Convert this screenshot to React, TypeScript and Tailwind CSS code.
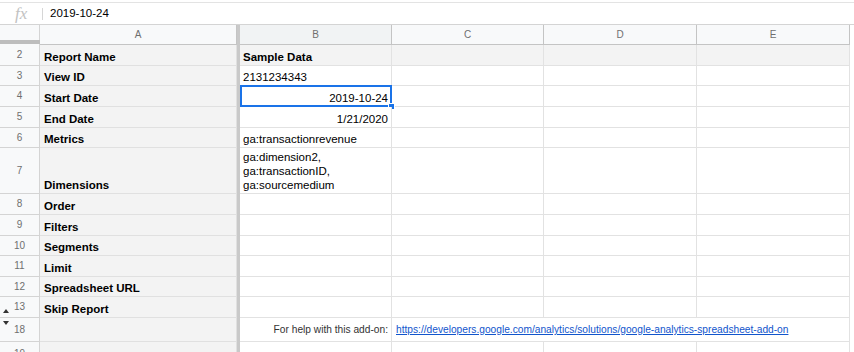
type Row = {
  n: string
  h: string
  a?: string
  b?: string | string[]
  right?: boolean
  bold?: boolean
  gray?: boolean
  selected?: boolean
  up?: boolean
}

const rows: Row[] = [
  { n: '2', h: 'h-[21px]', a: 'Report Name', b: 'Sample Data', bold: true, gray: true },
  { n: '3', h: 'h-[20px]', a: 'View ID', b: '2131234343' },
  { n: '4', h: 'h-[21px]', a: 'Start Date', b: '2019-10-24', right: true, selected: true },
  { n: '5', h: 'h-[21px]', a: 'End Date', b: '1/21/2020', right: true },
  { n: '6', h: 'h-[20px]', a: 'Metrics', b: 'ga:transactionrevenue' },
  { n: '7', h: 'h-[46px]', a: 'Dimensions', b: ['ga:dimension2,', 'ga:transactionID,', 'ga:sourcemedium'] },
  { n: '8', h: 'h-[21px]', a: 'Order' },
  { n: '9', h: 'h-[21px]', a: 'Filters' },
  { n: '10', h: 'h-[20px]', a: 'Segments' },
  { n: '11', h: 'h-[21px]', a: 'Limit' },
  { n: '12', h: 'h-[20px]', a: 'Spreadsheet URL' },
  { n: '13', h: 'h-[21px]', a: 'Skip Report', up: true },
]

const font = { fontFamily: '"Liberation Sans", Arial, sans-serif' }

function RowNum({ n, children }: { n: string; children?: React.ReactNode }) {
  return (
    <div className="relative flex w-[40px] shrink-0 items-center justify-center border-r border-b border-[#d4d4d4] bg-[#f8f9fa] text-[10px] text-[#6f6f6f]">
      {n}
      {children}
    </div>
  )
}

function FreezeBar() {
  return <div className="w-[3px] shrink-0 bg-[#c9c9c9]" />
}

export default function App() {
  return (
    <div className="h-[352px] w-[854px] overflow-hidden bg-white text-black" style={font}>
      {/* formula bar */}
      <div className="h-[3px] border-b border-[#e3e3e3]" />
      <div className="flex h-[21px] items-center">
        <div className="w-[42px] pl-[15px] text-[17px] italic leading-none text-[#c2c2c2]" style={{ fontFamily: '"Liberation Serif", serif' }}>
          fx
        </div>
        <div className="h-[12px] w-px bg-[#d6d6d6]" />
        <div className="pl-[7px] text-[11.5px]">2019-10-24</div>
      </div>

      {/* column headers */}
      <div className="flex h-[21px] border-t border-[#d4d4d4] text-[10px] text-[#6f6f6f]">
        <div className="relative w-[40px] shrink-0 border-r border-[#d4d4d4] bg-[#f8f9fa]">
          <div className="absolute bottom-[1px] left-0 h-[4px] w-[40px] bg-[#bdbdbd]" />
        </div>
        <div className="flex w-[197px] shrink-0 items-center justify-center border-r border-b border-[#c4c4c4] bg-[#f8f9fa]">A</div>
        <FreezeBar />
        <div className="flex w-[152px] shrink-0 items-center justify-center border-r border-b border-[#c4c4c4] bg-[#f1f3f4]">B</div>
        <div className="flex w-[152px] shrink-0 items-center justify-center border-r border-b border-[#c4c4c4] bg-[#f8f9fa]">C</div>
        <div className="flex w-[153px] shrink-0 items-center justify-center border-r border-b border-[#c4c4c4] bg-[#f8f9fa]">D</div>
        <div className="flex w-[153px] shrink-0 items-center justify-center border-r border-b border-[#c4c4c4] bg-[#f8f9fa]">E</div>
      </div>

      {rows.map((r) => {
        const bg = r.gray ? 'bg-[#f3f3f3]' : 'bg-white'
        return (
          <div key={r.n} className={`flex ${r.h} text-[11.5px] leading-[14px]`}>
            <RowNum n={r.n}>
              {r.up && (
                <svg className="absolute bottom-[4px] left-[3px]" width="6" height="4" viewBox="0 0 6 4">
                  <path d="M0 4 L3 0 L6 4 Z" fill="#333" />
                </svg>
              )}
            </RowNum>
            <div className="flex w-[197px] shrink-0 items-end border-r border-b border-[#e0e0e0] bg-[#f3f3f3] pb-[1px] pl-[4px] font-bold">
              {r.a}
            </div>
            <FreezeBar />
            <div
              className={`relative flex w-[152px] shrink-0 items-end border-r border-b border-[#e2e2e2] ${bg} px-[3px] pb-[1px] ${
                r.right ? 'justify-end' : ''
              } ${r.bold ? 'font-bold' : ''}`}
            >
              {Array.isArray(r.b) ? (
                <div>
                  {r.b.map((l) => (
                    <div key={l}>{l}</div>
                  ))}
                </div>
              ) : (
                r.b
              )}
              {r.selected && (
                <>
                  <div className="absolute -top-px -right-px -bottom-px left-0 border-2 border-[#1a73e8]" />
                  <div className="absolute -right-[4px] -bottom-[4px] h-[7px] w-[7px] border border-white bg-[#1a73e8]" />
                </>
              )}
            </div>
            <div className={`w-[152px] shrink-0 border-r border-b border-[#e2e2e2] ${bg}`} />
            <div className={`w-[153px] shrink-0 border-r border-b border-[#e2e2e2] ${bg}`} />
            <div className={`w-[153px] shrink-0 border-r border-b border-[#e2e2e2] ${bg}`} />
          </div>
        )
      })}

      {/* row 18 */}
      <div className="flex h-[24px] text-[10.2px] leading-[14px]">
        <RowNum n="18">
          <svg className="absolute top-[3px] left-[3px]" width="6" height="4" viewBox="0 0 6 4">
            <path d="M0 0 L6 0 L3 4 Z" fill="#333" />
          </svg>
        </RowNum>
        <div className="w-[197px] shrink-0 border-r border-b border-[#e0e0e0] bg-[#f3f3f3]" />
        <FreezeBar />
        <div className="flex w-[152px] shrink-0 items-end justify-end border-r border-b border-[#e2e2e2] px-[3px] pb-[4px] text-[#333]">
          For help with this add-on:
        </div>
        <div className="flex w-[458px] shrink-0 items-end border-r border-b border-[#e2e2e2] pb-[4px] pl-[4px]">
          <a className="whitespace-nowrap text-[#1155cc] underline" href="#">
            https://developers.google.com/analytics/solutions/google-analytics-spreadsheet-add-on
          </a>
        </div>
      </div>

      {/* row 19 */}
      <div className="flex h-[24px] text-[11.5px]">
        <RowNum n="19" />
        <div className="w-[197px] shrink-0 border-r border-b border-[#e0e0e0] bg-[#f3f3f3]" />
        <FreezeBar />
        <div className="w-[152px] shrink-0 border-r border-b border-[#e2e2e2]" />
        <div className="w-[152px] shrink-0 border-r border-b border-[#e2e2e2]" />
        <div className="w-[153px] shrink-0 border-r border-b border-[#e2e2e2]" />
        <div className="w-[153px] shrink-0 border-r border-b border-[#e2e2e2]" />
      </div>
    </div>
  )
}
